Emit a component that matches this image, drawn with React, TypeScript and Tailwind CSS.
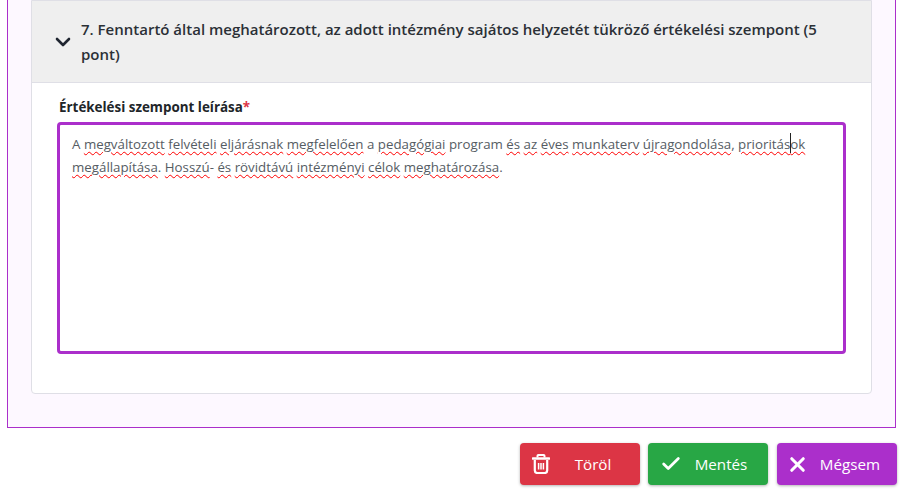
import { Check, ChevronDown, X } from 'lucide-react'

const TrashIcon = () => (
  <svg width="18" height="20" viewBox="0 0 18 20" fill="none" className="shrink-0">
    <path d="M5.5 3.5V1.8C5.5 1.3 5.9 1 6.3 1h5.4c.4 0 .8.3.8.8v1.7" stroke="white" strokeWidth="2" />
    <path d="M1 4.5h16" stroke="white" strokeWidth="2.6" strokeLinecap="round" />
    <path d="M2.8 6v10.5C2.8 17.9 3.9 19 5.3 19h7.4c1.4 0 2.5-1.1 2.5-2.5V6" stroke="white" strokeWidth="2.2" />
    <path d="M6.6 9v6.5M9 9v6.5M11.4 9v6.5" stroke="white" strokeWidth="1.5" />
  </svg>
)

const Wavy = ({ children }: { children: string }) => (
  <span className="underline decoration-wavy decoration-[#ff0000] decoration-[1.4px] underline-offset-[2px]">{children}</span>
)

const ActionButton = ({
  icon,
  label,
  className,
}: {
  icon: React.ReactNode
  label: string
  className: string
}) => (
  <button className={`flex h-[42px] w-[120px] items-center rounded text-[15.2px] text-white shadow-[0_1px_3px_rgba(0,0,0,0.3)] ${className}`}>
    {icon}
    <span className="flex-1 text-center">{label}</span>
  </button>
)

export default function App() {
  return (
    <div className="h-[494px] w-[903px] bg-white font-['Open_Sans','Noto_Sans',sans-serif]">
      <div className="ml-[7px] h-[428px] w-[889px] border-r border-b border-l border-[#ab2fcb] bg-[#fdf8ff] px-[23px]">
        <div className="h-[394px] rounded-b border border-[#dfdfe6] bg-white">
          <div className="flex h-[82px] items-center border-b border-[#dfdfe6] bg-[#efefef] pl-[19px] pr-[46px]">
            <ChevronDown size={24} strokeWidth={2.6} className="mr-[6px] shrink-0 text-[#1f2530]" />
            <h2 className="text-[15px] leading-[25px] font-semibold text-[#2b3036]">
              7. Fenntartó által meghatározott, az adott intézmény sajátos helyzetét tükröző értékelési szempont (5 pont)
            </h2>
          </div>
          <div className="px-[25px] pt-[14px]">
            <label className="ml-[2px] block text-[13.4px] leading-[20px] font-bold text-[#212529]">
              Értékelési szempont leírása<span className="text-[#dc3545]">*</span>
            </label>
            <div className="mt-[5px] h-[232px] rounded border-[3px] border-[#ab2fcb] bg-white px-[12px] py-[8px] text-[13.3px] leading-[23px] text-[#555c63]">
              A <Wavy>megváltozott</Wavy> <Wavy>felvételi</Wavy> <Wavy>eljárásnak</Wavy> <Wavy>megfelelően</Wavy> a{' '}
              <Wavy>pedagógiai</Wavy> program <Wavy>és</Wavy> <Wavy>az</Wavy> <Wavy>éves</Wavy> <Wavy>munkaterv</Wavy>{' '}
              <Wavy>újragondolása</Wavy>, <Wavy>prioritás</Wavy>
              <span className="relative">
                <span className="absolute top-[-2px] left-0 h-[20px] w-px bg-[#222]" />
              </span>
              <Wavy>ok</Wavy> <Wavy>megállapítása</Wavy>. <Wavy>Hosszú</Wavy>- <Wavy>és</Wavy> <Wavy>rövidtávú</Wavy>{' '}
              <Wavy>intézményi</Wavy> <Wavy>célok</Wavy> <Wavy>meghatározása</Wavy>.
            </div>
          </div>
        </div>
      </div>
      <div className="mt-[15px] ml-[520px] flex">
        <ActionButton icon={<span className="ml-[12px]"><TrashIcon /></span>} label="Töröl" className="bg-[#dc3545] pr-[4px]" />
        <ActionButton icon={<Check size={22} strokeWidth={3} className="ml-[12px] shrink-0" />} label="Mentés" className="ml-[8px] bg-[#28a745] pr-[8px]" />
        <ActionButton icon={<X size={23} strokeWidth={3.2} className="ml-[9px] shrink-0" />} label="Mégsem" className="ml-[9px] bg-[#ab2fcb] pr-[6px]" />
      </div>
    </div>
  )
}
